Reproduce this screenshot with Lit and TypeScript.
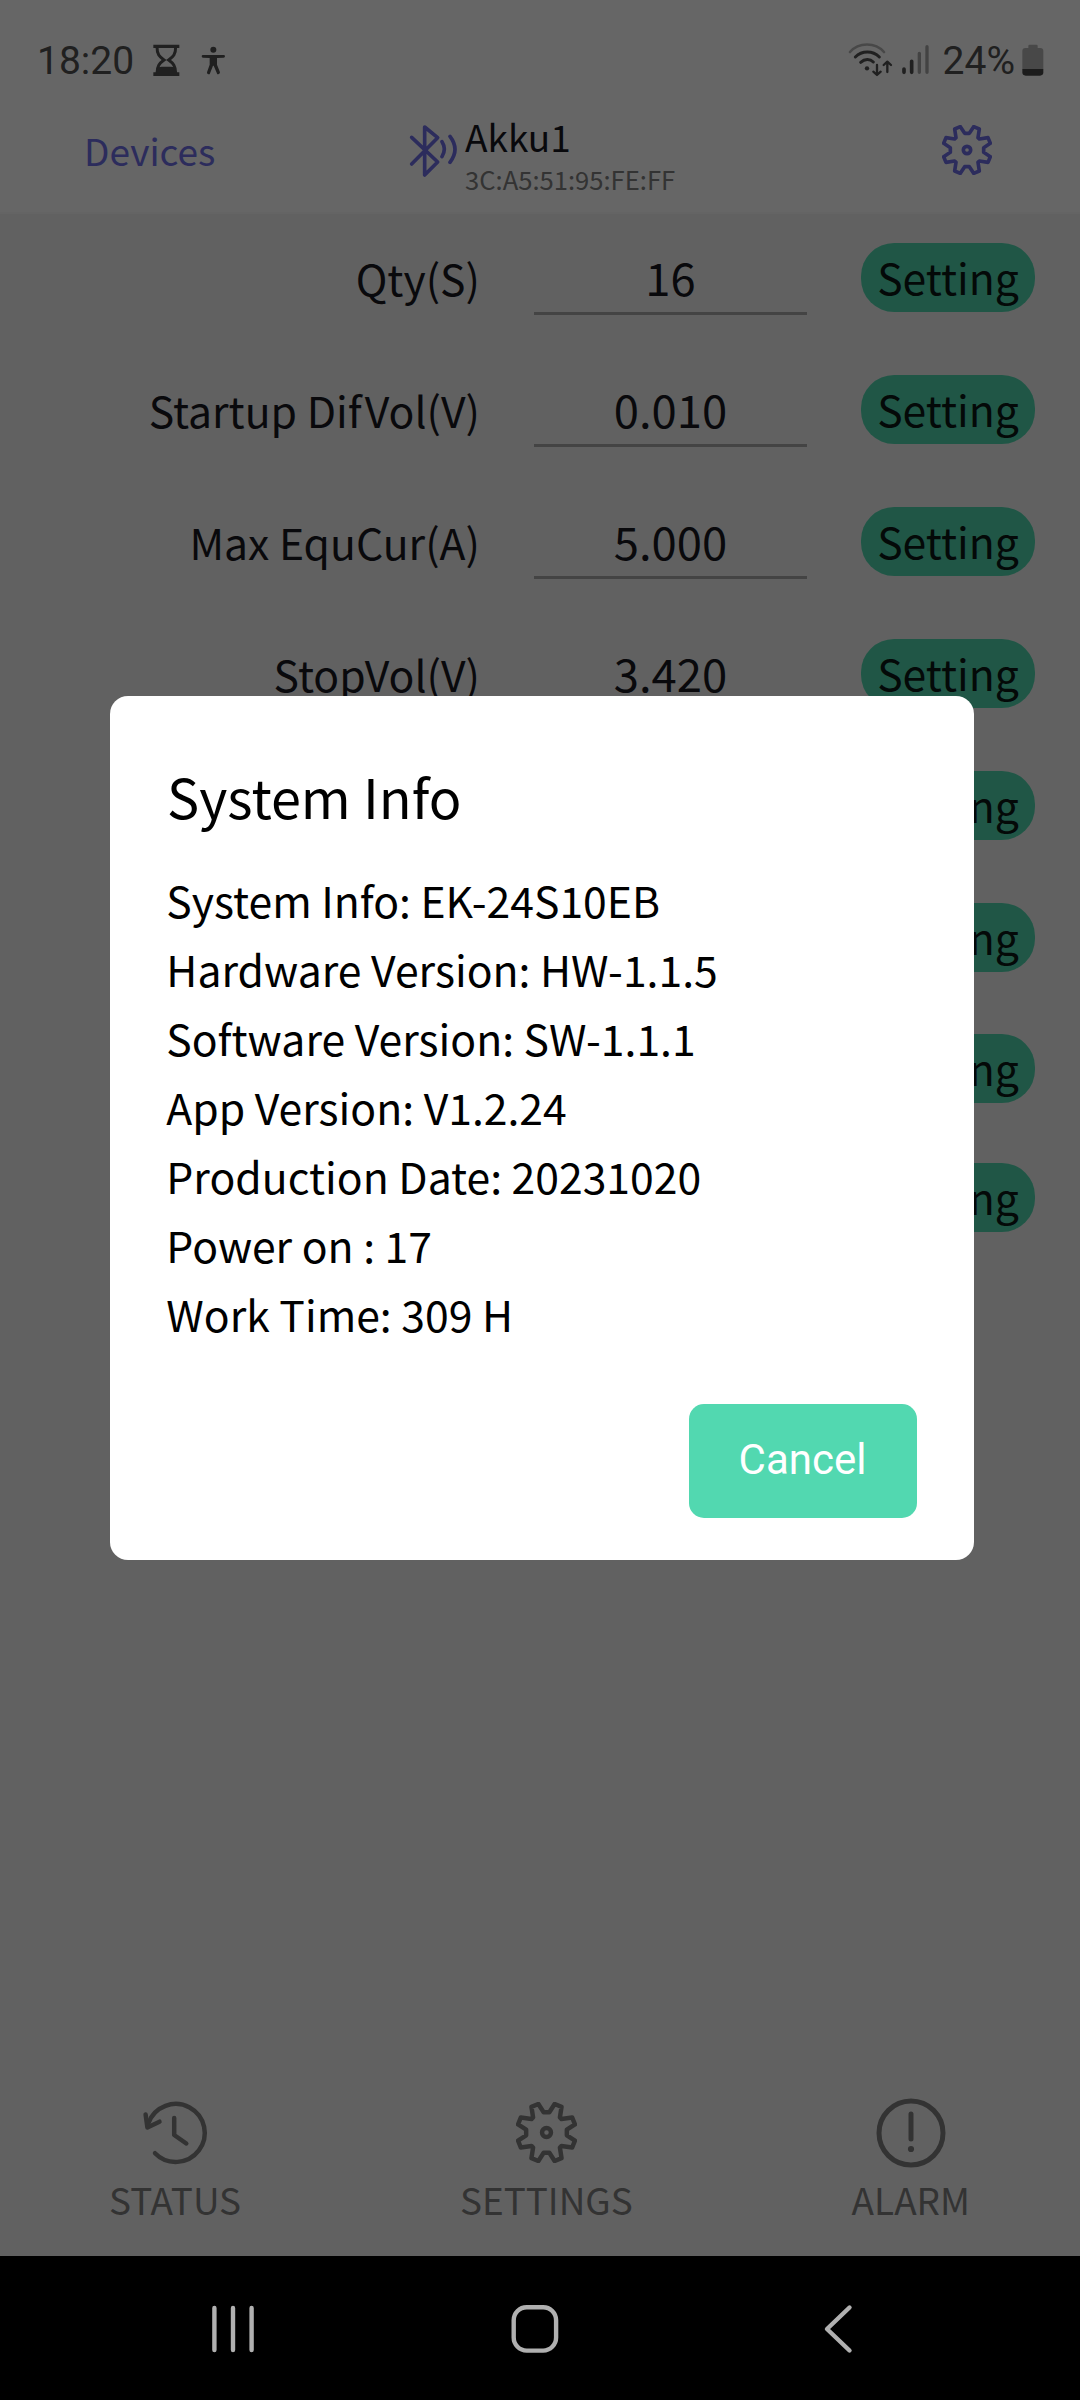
import { LitElement, html, css, svg, nothing } from "lit";
import { customElement, property } from "lit/decorators.js";

interface Field {
  label?: string;
  value?: string;
}

const FIELDS: Field[] = [
  { label: "Qty(S)", value: "16" },
  { label: "Startup DifVol(V)", value: "0.010" },
  { label: "Max EquCur(A)", value: "5.000" },
  { label: "StopVol(V)", value: "3.420" },
  {},
  {},
  {},
  {},
];

const INFO: string[] = [
  "System Info: EK-24S10EB",
  "Hardware Version: HW-1.1.5",
  "Software Version: SW-1.1.1",
  "App Version: V1.2.24",
  "Production Date: 20231020",
  "Power on : 17",
  "Work Time: 309 H",
];

/* One quarter of the gear outline; the full outline repeats it four times. */
const QUARTER: [number, number][] = [
  [-7, -50], [7, -50], [20, -70], [37, -63], [33, -37], [37, -33], [63, -37], [70, -20], [50, -7],
];
const GEAR = [0, 1, 2, 3]
  .map((turn) =>
    QUARTER.map(([x, y]) => {
      let p: [number, number] = [x, y];
      for (let i = 0; i < turn; i++) p = [-p[1], p[0]];
      return p.join(" ");
    }).join("L")
  )
  .join("L");

@customElement("gear-icon")
export class GearIcon extends LitElement {
  @property({ type: Number }) size = 50;

  static styles = css`
    :host { display: block; line-height: 0; }
  `;

  render() {
    return html`<svg width=${this.size} height=${this.size} viewBox="-75 -75 150 150"
      fill="none" stroke="currentColor" stroke-width="11" stroke-linejoin="round">
      ${svg`<path d=${"M" + GEAR + "Z"} /><circle r="11" />`}
    </svg>`;
  }
}

@customElement("status-bar")
export class StatusBar extends LitElement {
  static styles = css`
    :host {
      display: flex;
      height: 112px;
      padding: 0 36px 0 37px;
      box-sizing: border-box;
      color: #505050;
      font: 39px/46px Roboto, sans-serif;
      align-items: flex-start;
      justify-content: space-between;
    }
    .side { display: flex; padding-top: 38px; }
    .icons { display: block; }
    .left-icons { margin: 4px 0 0 18px; }
    .net { margin: 4px 13px 0 0; }
    .battery { margin: 6px 0 0 7px; }
  `;

  render() {
    return html`
      <div class="side">
        <span>18:20</span>
        <svg class="icons left-icons" width="76" height="36" viewBox="456 66 228 108">
          <path fill="currentColor" d="M460 74h78v10h-78zM460 157h78v11h-78z" />
          <path fill="none" stroke="currentColor" stroke-width="9"
            d="M471 80C471 104 478 110 492 120C478 130 471 138 471 160M527 80C527 104 520 110 506 120C520 130 527 138 527 160" />
          <path fill="currentColor" d="M470 160v-14q5-6 14-6h30q9 0 14 6v14z" />
          <circle fill="currentColor" cx="640" cy="89" r="9" />
          <path fill="currentColor"
            d="M609 105h62q4 0 4 4t-4 4l-20 1v20l9 23q0 5-5 6h-3l-11-26h-2l-10 26h-4q-5-1-4-6l8-23v-20l-20-1q-4 0-4-4t4-4z" />
        </svg>
      </div>
      <div class="side">
        <svg class="icons net" width="82" height="36" viewBox="84 66 246 108"
          fill="none" stroke="currentColor" stroke-linecap="round" stroke-linejoin="round">
          <path stroke="#b4b4b4" stroke-width="8" d="M90 96C116 66 166 66 192 96" />
          <path stroke-width="9" d="M106 111C126 91 158 91 178 111M122 127C134 116 150 116 160 126" />
          <circle fill="currentColor" stroke="none" cx="141" cy="145" r="6.5" />
          <path stroke-width="7" d="M171 135V164M160 155L171 165L182 155M202 156V126M191 135L202 125L213 135" />
          <path stroke-width="11" d="M252 147V157M275 124V157" />
          <path stroke="#a8a8a8" stroke-width="10" d="M298 100V157M321 80V157" />
        </svg>
        <span>24%</span>
        <svg class="icons battery" width="22" height="32" viewBox="605 72 66 96">
          <path fill="#b4b4b4" d="M627 74h22q3 0 3 4v6h8q9 0 9 9v55h-63v-55q0-9 9-9h9v-6q0-4 3-4z" />
          <path fill="#484848" d="M606 147h63v10q0 10-10 10h-43q-10 0-10-10z" />
        </svg>
      </div>
    `;
  }
}

@customElement("app-header")
export class AppHeader extends LitElement {
  static styles = css`
    :host {
      display: grid;
      grid-template-columns: 405px 60px 477px auto;
      height: 100px;
      color: #6e6ee6;
      font-family: "Noto Sans CJK SC", sans-serif;
    }
    .back { font-size: 37px; line-height: 54px; padding: 11px 0 0 84px; }
    .bt { display: block; margin-top: 12px; }
    .name { font-size: 37px; line-height: 42px; color: #18181f; margin-top: 3px; }
    .mac { font-size: 25.6px; line-height: 30px; color: #808080; margin-top: 7px; }
    gear-icon { margin-top: 13px; }
  `;

  render() {
    return html`
      <div class="back">Devices</div>
      <svg class="bt" width="54" height="54" viewBox="135 72 162 162"
        fill="none" stroke="currentColor" stroke-width="11" stroke-linecap="round" stroke-linejoin="round">
        <path d="M155 112L233 186L194 225V81L233 113L155 192" />
        <path d="M246 125Q260 147 246 170M270 109Q300 148 270 187" />
      </svg>
      <div>
        <div class="name">Akku1</div>
        <div class="mac">3C:A5:51:95:FE:FF</div>
      </div>
      <gear-icon size="50"></gear-icon>
    `;
  }
}

@customElement("setting-row")
export class SettingRow extends LitElement {
  @property({ attribute: false }) field: Field = {};

  static styles = css`
    :host {
      display: grid;
      grid-template-columns: 480px 273px 174px;
      column-gap: 54px;
      height: 69px;
      align-items: start;
      font: 42.7px/66px "Noto Sans CJK SC", sans-serif;
      color: #18181f;
    }
    .label { text-align: right; line-height: 69px; white-space: nowrap; }
    .value {
      height: 69px;
      line-height: 67px;
      font-size: 45.4px;
      text-align: center;
      border-bottom: 3px solid #aaa;
    }
    .button {
      height: 69px;
      border-radius: 33px;
      background: #52d8b0;
      color: #0a1814;
      text-align: center;
    }
  `;

  render() {
    return html`
      <div class="label">${this.field.label ?? nothing}</div>
      <div class="value">${this.field.value ?? nothing}</div>
      <div class="button">Setting</div>
    `;
  }
}

@customElement("tab-bar")
export class TabBar extends LitElement {
  static styles = css`
    :host {
      display: flex;
      justify-content: space-between;
      padding: 0 110px 32px 109px;
      color: #808080;
      font: 36.9px/50px "Noto Sans CJK SC", sans-serif;
    }
    .tab { display: flex; flex-direction: column; align-items: center; }
    .icon { height: 74px; padding-bottom: 4.5px; display: flex; align-items: center; }
    .icon svg { display: block; }
  `;

  render() {
    return html`
      <div class="tab">
        <div class="icon">
          <svg width="70" height="70" viewBox="141 2097.5 70 70"
            fill="none" stroke="currentColor" stroke-width="4.5" stroke-linecap="round" stroke-linejoin="round">
            <path d="M156 2152.7A29 29 0 1 0 149.5 2122.5" />
            <path d="M146.6 2114L148.4 2127L160.5 2121.2M175.2 2117.5V2134.5L187.3 2143" />
          </svg>
        </div>
        <div>STATUS</div>
      </div>
      <div class="tab">
        <div class="icon"><gear-icon size="61"></gear-icon></div>
        <div>SETTINGS</div>
      </div>
      <div class="tab">
        <div class="icon">
          <svg width="70" height="70" viewBox="-35 -35 70 70" fill="none" stroke="currentColor" stroke-width="5">
            <circle r="32" />
            <path stroke-linecap="round" d="M0 -19V6" />
            <circle cy="16" r="3.1" fill="currentColor" stroke="none" />
          </svg>
        </div>
        <div>ALARM</div>
      </div>
    `;
  }
}

@customElement("info-dialog")
export class InfoDialog extends LitElement {
  static styles = css`
    :host {
      display: flex;
      flex-direction: column;
      box-sizing: border-box;
      width: 864px;
      height: 864px;
      padding: 60px 57px 42px;
      border-radius: 18px;
      background: #fff;
      color: #000;
      font-family: "Noto Sans CJK SC", sans-serif;
    }
    .title { font-size: 54px; line-height: 80px; margin-bottom: 29px; }
    .line { font-size: 42.7px; line-height: 69px; white-space: nowrap; margin-left: -0.7px; }
    .cancel {
      align-self: flex-end;
      margin-top: auto;
      width: 228px;
      height: 114px;
      border: 0;
      border-radius: 15px;
      background: #52d8b0;
      color: #fff;
      font: 42px/110px Roboto, sans-serif;
      padding: 0 1px 2px 0;
    }
  `;

  render() {
    return html`
      <div class="title">System Info</div>
      ${INFO.map((line) => html`<div class="line">${line}</div>`)}
      <button class="cancel">Cancel</button>
    `;
  }
}

@customElement("app-root")
export class AppRoot extends LitElement {
  static styles = css`
    :host {
      display: flex;
      flex-direction: column;
      position: relative;
      width: 1080px;
      height: 2400px;
      overflow: hidden;
      background: #000;
    }
    .page {
      display: flex;
      flex-direction: column;
      height: 2256px;
      background: #f3f3f3;
    }
    .top { background: #fff; }
    .edge { height: 2px; background: #f9f9f9; }
    .rows { display: flex; flex-direction: column; padding-top: 29px; flex: 1; }
    setting-row { margin-bottom: 63px; }
    setting-row:nth-child(6) { margin-bottom: 62px; }
    setting-row:nth-child(7) { margin-bottom: 60px; }
    .shade {
      position: absolute;
      inset: 0 0 144px;
      background: rgba(0, 0, 0, 0.6);
    }
    info-dialog {
      position: absolute;
      left: 110px;
      top: 696px;
    }
    .nav { display: block; height: 144px; }
  `;

  render() {
    return html`
      <div class="page">
        <div class="top">
          <status-bar></status-bar>
          <app-header></app-header>
        </div>
        <div class="edge"></div>
        <div class="rows">
          ${FIELDS.map((field) => html`<setting-row .field=${field}></setting-row>`)}
        </div>
        <tab-bar></tab-bar>
      </div>
      <svg class="nav" width="1080" height="144" viewBox="0 2256 1080 144"
        fill="none" stroke="#b0b0b0" stroke-width="4.4" stroke-linecap="round" stroke-linejoin="round">
        <path d="M214.4 2308V2350M233 2308V2350M251.6 2308V2350" />
        <rect x="513.7" y="2307.2" width="42.4" height="43.4" rx="13" />
        <path d="M849.5 2307.5L827 2329L849.5 2350.5" />
      </svg>
      <div class="shade"></div>
      <info-dialog></info-dialog>
    `;
  }
}
